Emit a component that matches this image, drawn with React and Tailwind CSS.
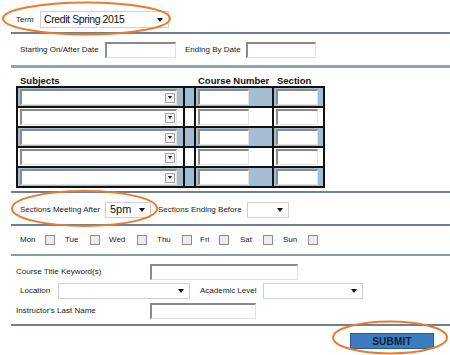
import React from "react";

const Tri = () => (
  <span className="inline-block w-0 h-0 border-l-[3px] border-r-[3px] border-t-[4px] border-l-transparent border-r-transparent border-t-[#111]" />
);

const SmallTri = () => (
  <span className="inline-block w-0 h-0 border-l-[2.5px] border-r-[2.5px] border-t-[3px] border-l-transparent border-r-transparent border-t-[#222]" />
);

const Inset = ({ className = "" }) => (
  <div className={"bg-white border-t-2 border-l-2 border-r border-b border-t-[#8a8a8a] border-l-[#8a8a8a] border-r-[#e2e2e2] border-b-[#e2e2e2] " + className} />
);

const SubjSelect = () => (
  <div className="ml-[2px] w-[157px] h-[16px] bg-white border-t-2 border-l-2 border-r border-b border-t-[#8a8a8a] border-l-[#8a8a8a] border-r-[#e2e2e2] border-b-[#e2e2e2] flex items-center justify-end pr-[1px]">
    <div className="w-[10px] h-[10px] bg-[#f0f0f0] border border-[#a8a8a8] flex items-center justify-center">
      <SmallTri />
    </div>
  </div>
);

const Row = ({ blue }) => {
  const bg = blue ? "bg-[#a5bdd3]" : "bg-white";
  return (
    <div className="flex h-[20px] border-t-2 border-[#111]">
      <div className={"w-[167px] border-r-2 border-[#111] flex items-center " + bg}>
        <SubjSelect />
      </div>
      <div className={"w-[11px] border-r-2 border-[#111] " + bg} />
      <div className={"w-[78px] border-r-2 border-[#111] flex items-center " + bg}>
        <Inset className="ml-[2px] w-[51px] h-[16px]" />
      </div>
      <div className={"w-[51px] border-r-2 border-[#111] flex items-center " + bg}>
        <Inset className="ml-[2px] w-[42px] h-[16px]" />
      </div>
    </div>
  );
};

const Cb = () => <div className="w-[10px] h-[10px] border border-[#8d8d8d] bg-[#ececec]" />;

const Sel = ({ className = "", children }) => (
  <div className={"h-[16px] bg-white border border-[#cfcfcf] flex items-center justify-between pr-[5px] " + className}>
    <span>{children}</span>
    <Tri />
  </div>
);

export default function App() {
  return (
    <div className="relative w-[450px] h-[355px] bg-white overflow-hidden text-[#222] font-['Liberation_Sans',Arial,sans-serif] text-[8px]">
      {/* Term */}
      <div className="h-[32px] flex items-start pt-[11px] pl-[16px]">
        <span className="w-[24px] leading-[17px]">Term</span>
        <Sel className="w-[129px] h-[17px] text-[10.5px] tracking-[-0.4px] text-[#111] pl-[3px]">Credit Spring 2015</Sel>
      </div>
      <div className="ml-[11px] h-[2px] bg-[#6f808f]" />

      {/* Dates */}
      <div className="h-[31px] flex items-center pl-[20px]">
        <span className="w-[85px]">Starting On/After Date</span>
        <Inset className="w-[71px] h-[16px]" />
        <span className="ml-[9px] w-[61px]">Ending By Date</span>
        <Inset className="w-[70px] h-[16px]" />
      </div>
      <div className="ml-[11px] h-[3px] bg-[#8fa2b3]" />

      {/* Table */}
      <div className="h-[18px] flex items-end pb-[1px] font-bold text-[9.5px] text-[#111] leading-none">
        <span className="ml-[20px] w-[178px]">Subjects</span>
        <span className="w-[79px]">Course Number</span>
        <span>Section</span>
      </div>
      <div className="ml-[16px] w-[309px] border-l-2 border-b-2 border-[#111]">
        <Row blue />
        <Row />
        <Row blue />
        <Row />
        <Row blue />
      </div>
      <div className="mt-[3px] ml-[11px] h-[2px] bg-[#6f808f]" />

      {/* Sections meeting */}
      <div className="h-[31px] flex items-center pl-[20px] pt-[2px]">
        <span className="w-[85px]">Sections Meeting After</span>
        <Sel className="w-[46px] text-[11px] text-[#111] pl-[4px]">5pm</Sel>
        <span className="ml-[7px] w-[89px]">Sections Ending Before</span>
        <Sel className="w-[42px]"></Sel>
      </div>
      <div className="ml-[11px] h-[2px] bg-[#6f808f]" />

      {/* Days */}
      <div className="h-[28px] flex items-center pl-[20px]">
        <span className="w-[25px]">Mon</span>
        <Cb />
        <span className="ml-[10px] w-[25px]">Tue</span>
        <Cb />
        <span className="ml-[9px] w-[28px]">Wed</span>
        <Cb />
        <span className="ml-[10px] w-[25px]">Thu</span>
        <Cb />
        <span className="ml-[8px] w-[19px]">Fri</span>
        <Cb />
        <span className="ml-[11px] w-[23px]">Sat</span>
        <Cb />
        <span className="ml-[10px] w-[25px]">Sun</span>
        <Cb />
      </div>
      <div className="ml-[11px] h-[2px] bg-[#8d9aa6]" />

      {/* Fields */}
      <div className="h-[68px] flex flex-col pt-[8px]">
        <div className="h-[16px] flex items-center pl-[16px]">
          <span className="w-[134px]">Course Title Keyword(s)</span>
          <Inset className="w-[148px] h-[16px]" />
        </div>
        <div className="mt-[3px] h-[16px] flex items-center pl-[20px]">
          <span className="w-[38px]">Location</span>
          <Sel className="w-[132px]"></Sel>
          <span className="ml-[10px] w-[63px]">Academic Level</span>
          <Sel className="w-[100px]"></Sel>
        </div>
        <div className="mt-[4px] h-[16px] flex items-center pl-[16px]">
          <span className="w-[134px]">Instructor's Last Name</span>
          <Inset className="w-[106px] h-[16px]" />
        </div>
      </div>
      <div className="ml-[11px] h-[2px] bg-[#6f808f]" />

      {/* Submit */}
      <div className="mt-[7px] ml-[350px] w-[84px] h-[16px] bg-[#3b7dc0] border border-[#2a5a8a] flex items-center justify-center font-bold text-[10px] text-[#0e1e30] tracking-[0.2px]">
        SUBMIT
      </div>

      {/* annotation ellipses */}
      <svg className="absolute left-0 top-0 pointer-events-none" width="450" height="355">
        <ellipse cx="86.5" cy="18.5" rx="83.5" ry="16" fill="none" stroke="#ec7a2c" strokeWidth="2" />
        <ellipse cx="84.5" cy="208.5" rx="72.5" ry="17.5" fill="none" stroke="#ec7a2c" strokeWidth="2" />
        <ellipse cx="390" cy="337.5" rx="57" ry="16" fill="none" stroke="#ec7a2c" strokeWidth="2" />
      </svg>
    </div>
  );
}
